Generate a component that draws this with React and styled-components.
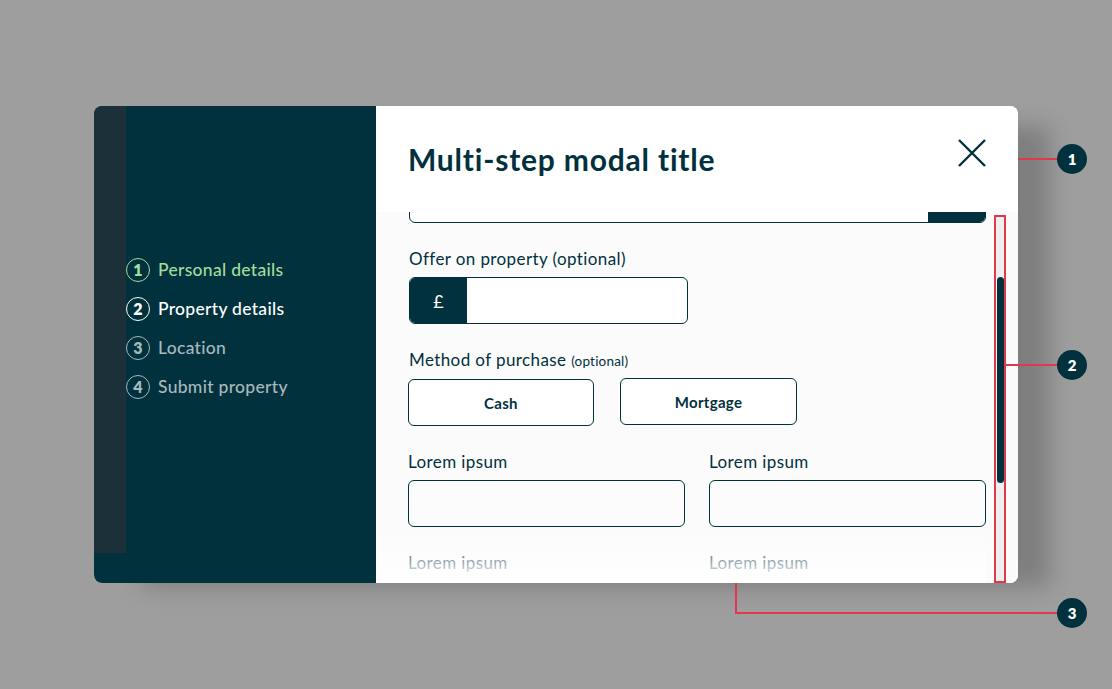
import React from "react";
import styled, { createGlobalStyle } from "styled-components";

const DARK = "#01313d";
const RED = "#e0394c";

const Global = createGlobalStyle`
  * { box-sizing: border-box; }
  html, body { margin: 0; padding: 0; }
  body { background: #9e9e9e; font-family: Lato, "Open Sans", sans-serif; color: ${DARK}; }
`;

const Stage = styled.div`
  position: relative;
  width: 1112px;
  height: 689px;
  display: flex;
  align-items: center;
  justify-content: center;
  overflow: hidden;
`;

const Modal = styled.div`
  width: 924px;
  height: 477px;
  display: flex;
  border-radius: 8px;
  overflow: hidden;
  background: #fff;
  box-shadow: 40px 12px 22px -8px rgba(0, 0, 0, 0.2);
`;

const Sidebar = styled.aside`
  width: 282px;
  flex: none;
  background: ${DARK};
  display: flex;
  padding-bottom: 30px;
`;

const Strip = styled.div`
  width: 32px;
  flex: none;
  background: #1c3039;
`;

const Steps = styled.ol`
  list-style: none;
  margin: 0;
  padding: 0;
  align-self: center;
  display: flex;
  flex-direction: column;
  gap: 15px;
  margin-top: -3px;
`;

const Step = styled.li`
  display: flex;
  align-items: center;
  gap: 8px;
  height: 24px;
  color: ${(p) => p.$color};
  font-size: 17.5px;
  font-weight: 500;
  letter-spacing: 0.3px;
`;

const StepNum = styled.span`
  width: 24px;
  height: 24px;
  border-radius: 50%;
  border: 1.5px solid currentColor;
  display: flex;
  align-items: center;
  justify-content: center;
  font-size: 16px;
  font-weight: 800;
  line-height: 1;
`;

const Main = styled.section`
  flex: 1;
  display: flex;
  flex-direction: column;
  min-width: 0;
`;

const Header = styled.header`
  height: 106px;
  flex: none;
  background: #fff;
  display: flex;
  align-items: center;
  justify-content: space-between;
  padding: 0 32px 0 33px;
`;

const Title = styled.h1`
  margin: 0 0 0 -1px;
  font-size: 30px;
  font-weight: 700;
  letter-spacing: 0.8px;
  color: ${DARK};
`;

const CloseBtn = styled.button`
  width: 28px;
  height: 28px;
  padding: 0;
  border: 0;
  background: none;
  display: block;
  margin-top: -13px;
  cursor: pointer;
`;

const Body = styled.div`
  flex: 1;
  display: flex;
  background: #fbfbfb;
  min-height: 0;
`;

const FormCol = styled.div`
  position: relative;
  flex: 1;
  overflow: hidden;
  padding-left: 33px;
`;

const Form = styled.div`
  display: flex;
  flex-direction: column;
  gap: 26px;
  margin-top: -36px;
`;

const Field = styled.div`
  display: flex;
  flex-direction: column;
  gap: 8px;
`;

const Label = styled.label`
  font-size: 17px;
  line-height: 20px;
  color: ${DARK};
  letter-spacing: 0.4px;
  white-space: nowrap;
`;

const Small = styled.span`
  font-size: 13.5px;
  letter-spacing: 0.2px;
`;

const InputBox = styled.div`
  height: 47px;
  width: ${(p) => p.$w || "100%"};
  border: 1px solid ${DARK};
  border-radius: 6px;
  background: ${(p) => (p.$white ? "#fff" : "#fcfcfc")};
  display: flex;
  overflow: hidden;
`;

const Prefix = styled.span`
  width: 57px;
  flex: none;
  background: ${DARK};
  color: #fff;
  display: flex;
  align-items: center;
  justify-content: center;
  font-size: 18px;
`;

const Suffix = styled.span`
  width: 57px;
  flex: none;
  margin-left: auto;
  background: ${DARK};
`;

const Choices = styled.div`
  display: flex;
  gap: 26px;
  align-items: flex-start;
  margin-left: -1px;
`;

const Choice = styled.button`
  height: 47px;
  width: ${(p) => p.$w}px;
  margin-top: ${(p) => p.$dy || 0}px;
  border: 1px solid ${DARK};
  border-radius: 6px;
  background: #fff;
  color: ${DARK};
  font-family: inherit;
  font-size: 15px;
  font-weight: 700;
  letter-spacing: 0.3px;
  cursor: pointer;
`;

const Grid = styled.div`
  display: grid;
  grid-template-columns: 277px 277px;
  column-gap: 24px;
  row-gap: 26px;
  margin-left: -1px;
`;

const Fade = styled.div`
  position: absolute;
  left: 0;
  right: 0;
  bottom: 0;
  height: 48px;
  background: linear-gradient(to bottom, rgba(255, 255, 255, 0), #fff 95%);
  pointer-events: none;
`;

const Track = styled.div`
  width: 10px;
  flex: none;
  margin: 3px 13px 1px 9px;
  background: #efefef;
  padding: 62px 1px 0 2px;
`;

const Thumb = styled.div`
  height: 206px;
  width: 7px;
  border-radius: 4px;
  background: ${DARK};
`;

/* annotation overlay */
const Line = styled.div`
  position: absolute;
  background: ${RED};
  left: ${(p) => p.$x}px;
  top: ${(p) => p.$y}px;
  width: ${(p) => p.$w}px;
  height: ${(p) => p.$h}px;
`;

const Frame = styled.div`
  position: absolute;
  left: 994px;
  top: 215px;
  width: 12px;
  height: 368px;
  border: 2px solid ${RED};
`;

const Marker = styled.div`
  position: absolute;
  left: ${(p) => p.$x - 15}px;
  top: ${(p) => p.$y - 15}px;
  width: 30px;
  height: 30px;
  border-radius: 50%;
  background: ${DARK};
  color: #fff;
  font-size: 15px;
  font-weight: 800;
  display: flex;
  align-items: center;
  justify-content: center;
`;

const steps = [
  { n: 1, label: "Personal details", color: "#a3dc9c" },
  { n: 2, label: "Property details", color: "#ffffff" },
  { n: 3, label: "Location", color: "#a7b8bc" },
  { n: 4, label: "Submit property", color: "#a7b8bc" },
];

export default function App() {
  return (
    <>
      <Global />
      <Stage>
        <Modal>
          <Sidebar>
            <Strip />
            <Steps>
              {steps.map((s) => (
                <Step key={s.n} $color={s.color}>
                  <StepNum>{s.n}</StepNum>
                  {s.label}
                </Step>
              ))}
            </Steps>
          </Sidebar>
          <Main>
            <Header>
              <Title>Multi-step modal title</Title>
              <CloseBtn aria-label="Close">
                <svg width="28" height="28" viewBox="0 0 28 28">
                  <path d="M1 1 L27 27 M27 1 L1 27" stroke={DARK} strokeWidth="2.4" fill="none" />
                </svg>
              </CloseBtn>
            </Header>
            <Body>
              <FormCol>
                <Form>
                  <InputBox $white>
                    <Suffix />
                  </InputBox>
                  <Field>
                    <Label>Offer on property (optional)</Label>
                    <InputBox $w="279px" $white>
                      <Prefix>£</Prefix>
                    </InputBox>
                  </Field>
                  <Field>
                    <Label>
                      Method of purchase <Small>(optional)</Small>
                    </Label>
                    <Choices>
                      <Choice $w={186}>Cash</Choice>
                      <Choice $w={177} $dy={-1}>Mortgage</Choice>
                    </Choices>
                  </Field>
                  <Grid>
                    <Field>
                      <Label>Lorem ipsum</Label>
                      <InputBox />
                    </Field>
                    <Field>
                      <Label>Lorem ipsum</Label>
                      <InputBox />
                    </Field>
                    <Field>
                      <Label>Lorem ipsum</Label>
                      <InputBox />
                    </Field>
                    <Field>
                      <Label>Lorem ipsum</Label>
                      <InputBox />
                    </Field>
                  </Grid>
                </Form>
                <Fade />
              </FormCol>
              <Track>
                <Thumb />
              </Track>
            </Body>
          </Main>
        </Modal>

        <Line $x={1018} $y={158} $w={40} $h={2} />
        <Marker $x={1072} $y={159}>1</Marker>

        <Frame />
        <Line $x={1006} $y={364} $w={52} $h={2} />
        <Marker $x={1072} $y={365}>2</Marker>

        <Line $x={735} $y={583} $w={2} $h={31} />
        <Line $x={735} $y={612} $w={323} $h={2} />
        <Marker $x={1072} $y={613}>3</Marker>
      </Stage>
    </>
  );
}
